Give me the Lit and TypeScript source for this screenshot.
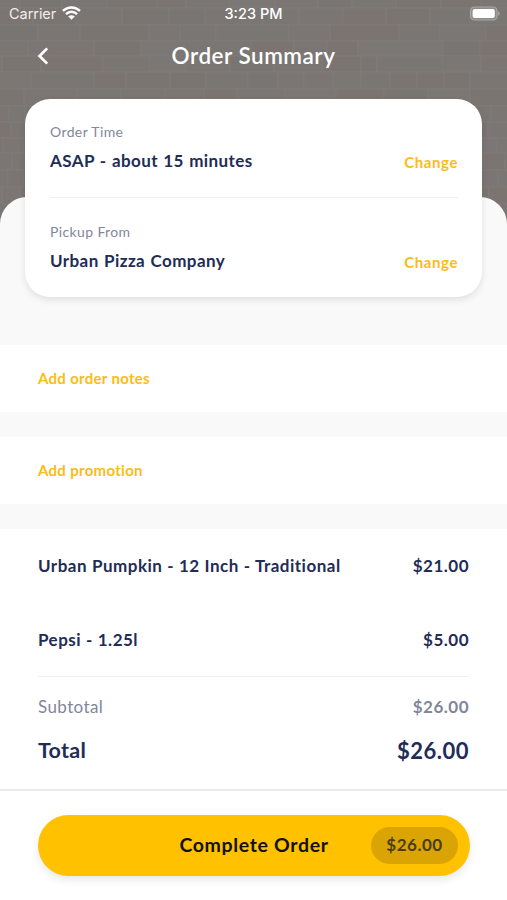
import { LitElement, html, svg, css } from "lit";
import { customElement, property } from "lit/decorators.js";

// Mortar lines of the wall, and the brick joints of each course between them.
const courses = [-8, 8, 25, 41, 56, 72, 89, 106, 122, 138, 153, 170, 187, 204, 222];
const joints = [
  [20, 62, 107, 157, 186, 230, 275, 318, 352, 396, 441, 481],
  [33, 76, 122, 169, 205, 242, 263, 299, 343, 386, 430, 470],
  [38, 80, 149, 180, 216, 289, 330, 399, 440, 486],
  [28, 94, 141, 184, 251, 294, 327, 358, 443, 480],
  [2, 41, 103, 150, 186, 230, 274, 322, 361, 377, 442, 481],
  [31, 94, 126, 170, 206, 248, 278, 304, 333, 361, 390, 417, 444, 470],
  [24, 77, 121, 165, 204, 237, 285, 336, 384, 428, 470],
  [9, 25, 60, 98, 143, 187, 232, 276, 320, 364, 409, 451, 491],
  [11, 44, 90, 130, 180, 220, 270, 310, 350, 400, 452, 488],
  [3, 24, 66, 110, 150, 190, 240, 290, 330, 370, 420, 466, 497],
  [12, 30, 70, 120, 160, 200, 250, 300, 340, 390, 440, 483, 505],
  [8, 24, 70, 120, 160, 200, 250, 300, 340, 390, 440, 470, 498],
  [2, 20, 70, 120, 160, 200, 250, 300, 340, 390, 440, 489],
  [14, 40, 80, 120, 160, 200, 250, 300, 340, 390, 440, 480, 499],
];
const tones = ["#7b7673", "#7a7673", "#7b7572", "#797572", "#7b7774", "#7b7471", "#797673"];

@customElement("brick-wall")
export class BrickWall extends LitElement {
  static styles = css`
    :host { display: block; }
    svg { display: block; width: 507px; height: 224px; }
  `;
  render() {
    return html`<svg viewBox="0 0 507 224" aria-hidden="true">
      <rect width="507" height="224" fill="#7b7774"></rect>
      ${joints.map((row, r) => {
        const y = courses[r];
        const h = courses[r + 1] - y;
        const xs = [-12, ...row, 520];
        return xs.slice(0, -1).map(
          (x, i) => svg`<rect x=${x} y=${y} width=${xs[i + 1] - x} height=${h}
            fill=${tones[(r * 5 + i * 3 + ((i * r) % 4)) % tones.length]}
            stroke="#807b78" stroke-width="1"></rect>`
        );
      })}
    </svg>`;
  }
}

@customElement("choice-row")
export class ChoiceRow extends LitElement {
  @property() label = "";
  @property() value = "";
  static styles = css`
    :host { display: flex; justify-content: space-between; align-items: flex-end; height: 51px; }
    .label { font-size: 14px; line-height: 18px; letter-spacing: 0.38px; color: #82869c; }
    .value { margin-top: 8px; font-size: 17px; line-height: 24px; font-weight: 700; color: #222c56; letter-spacing: 0.42px; word-spacing: 0.8px; white-space: nowrap; }
    .change { font-size: 15px; line-height: 22px; font-weight: 700; color: #fcbc14; letter-spacing: 0.6px; }
  `;
  render() {
    return html`<div><div class="label">${this.label}</div><div class="value">${this.value}</div></div>
      <div class="change">Change</div>`;
  }
}

@customElement("app-root")
export class AppRoot extends LitElement {
  static styles = css`
    :host { display: block; font-family: Lato, "Liberation Sans", sans-serif; color: #222c56; }
    * { box-sizing: border-box; }
    .screen { position: relative; display: flex; flex-direction: column; height: 900px; overflow: hidden; background: #fff; }
    .wall { position: absolute; top: 0; left: 0; }
    .status { position: relative; display: grid; grid-template-columns: 1fr auto 1fr; align-items: center; height: 28px; padding: 0 7px 0 9px; color: #fff; font: 500 14.5px/28px Inter, sans-serif; }
    .carrier { display: flex; align-items: center; gap: 6px; font-weight: 400; color: #eee; letter-spacing: -0.05px; }
    .icon { display: block; }
    .wifi { margin-top: -2px; }
    .battery { justify-self: end; margin-top: -1px; }
    .time { margin-left: -2px; }
    .nav { position: relative; display: grid; grid-template-columns: 60px 1fr 60px; align-items: center; height: 56px; margin-bottom: 14.5px; color: #fff; }
    .back { padding-left: 36px; }
    .title { padding-bottom: 2px; text-align: center; font-size: 22.5px; font-weight: 600; letter-spacing: 0.5px; }
    .card { position: relative; z-index: 1; flex: none; height: 198px; margin: 0 25px; padding: 23.5px 24px 0 25px; border-radius: 25px; background: #fff; box-shadow: 0 3px 7px rgba(0, 0, 0, 0.1); }
    .rule { height: 1px; margin: 23.5px 0 24px; background: #f0f0f2; }
    .sheet { position: relative; flex: none; margin-top: -99.5px; height: 332px; padding-top: 148px; border-radius: 27px 27px 0 0; background: #f9f9f9; display: flex; flex-direction: column; gap: 25px; }
    .action { height: 67px; padding-left: 38px; background: #fff; line-height: 67px; font-size: 15px; font-weight: 700; letter-spacing: 0.3px; color: #fcbc14; }
    .lines { flex: 1; padding: 0 38px; }
    .line { display: flex; justify-content: space-between; align-items: center; height: 73.5px; font-size: 17px; font-weight: 700; letter-spacing: 0.5px; word-spacing: 0.25px; }
    .divider { height: 1px; background: #f0f0f2; }
    .subtotal { height: 59px; color: #82869c; }
    .subtotal .name { font-weight: 400; letter-spacing: 0.4px; }
    .total { height: 28px; font-size: 22px; }
    .total .name { font-size: 21.5px; letter-spacing: 0.3px; }
    .footer { height: 111px; padding: 24px 37px 0 38px; border-top: 2px solid #ebebeb; background: #fff; }
    .button { display: grid; grid-template-columns: 1fr auto 1fr; align-items: center; height: 61px; padding: 0 12px; border-radius: 31px; background: #ffc100; box-shadow: 0 4px 8px rgba(0, 0, 0, 0.09); color: #111; }
    .cta { grid-column: 2; padding-bottom: 2px; font-size: 19.5px; font-weight: 700; letter-spacing: 0.65px; }
    .price { justify-self: end; width: 87px; height: 37px; border-radius: 19px; background: #d9a404; color: #4b3d12; text-align: center; font-size: 17px; line-height: 35px; font-weight: 700; letter-spacing: 0.5px; }
  `;
  render() {
    return html`<div class="screen">
      <brick-wall class="wall"></brick-wall>
      <div class="status">
        <div class="carrier"><span>Carrier</span>
          <svg class="icon wifi" width="19" height="14" viewBox="0 0 19 14" fill="none" stroke="#fff" stroke-width="2.5">
            <path d="M1 4.9C5.8.2 13.2.2 18 4.9M4 8.1c3.2-3 7.8-3 11 0"></path>
            <path d="M9.5 13.7 6.2 10.4c1.9-1.7 4.7-1.7 6.6 0Z" fill="#fff" stroke="none"></path>
          </svg>
        </div>
        <div class="time">3:23 PM</div>
        <svg class="icon battery" width="31" height="15" viewBox="0 0 31 15">
          <rect x="1.6" y="1" width="26.4" height="13" rx="3.8" fill="#8f8b89" stroke="#aaa6a4" stroke-width="1.2"></rect>
          <rect x="3.6" y="3" width="22.2" height="9" rx="2" fill="#fff"></rect>
          <path d="M29.2 5.2c2 .8 2 3.8 0 4.6Z" fill="#aaa6a4"></path>
        </svg>
      </div>
      <div class="nav">
        <div class="back"><svg class="icon" width="14" height="18" viewBox="0 0 14 18" fill="none" stroke="#fff" stroke-width="2.7"><path d="M11.2 1.4 3.5 9l7.7 7.6"></path></svg></div>
        <div class="title">Order Summary</div>
      </div>
      <div class="card">
        <choice-row label="Order Time" value="ASAP - about 15 minutes"></choice-row>
        <div class="rule"></div>
        <choice-row label="Pickup From" value="Urban Pizza Company"></choice-row>
      </div>
      <div class="sheet">
        <div class="action">Add order notes</div>
        <div class="action">Add promotion</div>
      </div>
      <div class="lines">
        <div class="line"><span>Urban Pumpkin - 12 Inch - Traditional</span><span>$21.00</span></div>
        <div class="line"><span>Pepsi - 1.25l</span><span>$5.00</span></div>
        <div class="divider"></div>
        <div class="line subtotal"><span class="name">Subtotal</span><span>$26.00</span></div>
        <div class="line total"><span class="name">Total</span><span>$26.00</span></div>
      </div>
      <div class="footer">
        <div class="button"><span class="cta">Complete Order</span><span class="price">$26.00</span></div>
      </div>
    </div>`;
  }
}
